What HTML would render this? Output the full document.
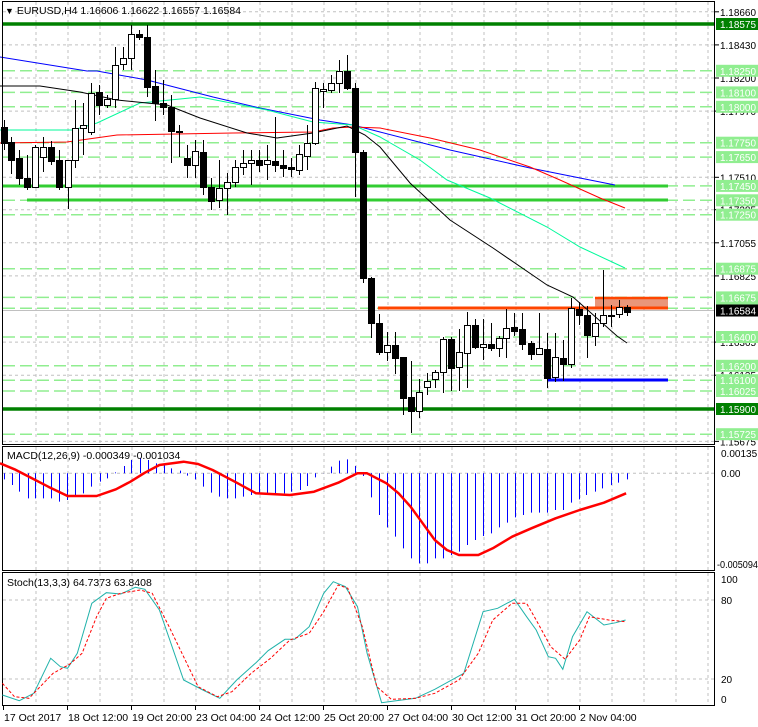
<!DOCTYPE html>
<html><head><meta charset="utf-8"><style>
html,body{margin:0;padding:0;background:#fff;}
svg{display:block;font-family:"Liberation Sans",sans-serif;font-size:10.5px;}
</style></head><body>
<svg id="s" width="758" height="727" viewBox="0 0 758 727" xmlns="http://www.w3.org/2000/svg">
<rect width="758" height="727" fill="#fff"/>
<g id="grid" stroke="#c0c0c0" stroke-dasharray="3,3" stroke-width="1"></g>
<g id="lg" stroke="#90ee90" stroke-width="1.5" stroke-dasharray="12,5"></g>
<line x1="3" y1="24" x2="715" y2="24" stroke="#008000" stroke-width="3.5"/>
<line x1="3" y1="409" x2="715" y2="409" stroke="#008000" stroke-width="3.5"/>
<line x1="3" y1="186" x2="668" y2="186" stroke="#32cd32" stroke-width="3"/>
<line x1="27" y1="200" x2="668" y2="200" stroke="#32cd32" stroke-width="3"/>
<line x1="3" y1="310.5" x2="715" y2="310.5" stroke="#c0c0c0" stroke-width="1"/>
<rect x="595" y="297" width="73" height="11" fill="#e9967a"/>
<line x1="595" y1="298" x2="668" y2="298" stroke="#ff4500" stroke-width="2.5"/>
<line x1="378" y1="308" x2="668" y2="308" stroke="#ff4500" stroke-width="3"/>
<line x1="547" y1="380" x2="668" y2="380" stroke="#0000ff" stroke-width="3"/>
<polyline fill="none" stroke="#0000ff" stroke-width="1" points="0,57 87,71 97,71 147,80 213,97 260,108 320,120 353,125 380,132 450,150 530,168 615,185"/>
<polyline fill="none" stroke="#ff0000" stroke-width="1" points="0,143 67,142 117,135 233,133 313,132 333,128 353,127 380,128 430,138 480,150 530,167 560,180 600,198 625,208"/>
<polyline fill="none" stroke="#00fa9a" stroke-width="1" points="0,130 73,130 97,123 140,103 200,97 267,110 313,122 353,125 380,137 420,160 447,180 490,198 547,227 580,247 625,268"/>
<polyline fill="none" stroke="#000" stroke-width="1" points="0,86 40,86 80,92 117,100 167,105 200,118 247,133 277,138 313,133 347,126 365,135 380,147 410,183 450,220 493,248 547,285 573,297 617,336 627,343"/>
<g id="candles"></g>
<rect x="2.5" y="1.5" width="712" height="443" fill="none" stroke="#000"/>
<rect x="2.5" y="446.5" width="712" height="124" fill="none" stroke="#000"/>
<rect x="2.5" y="572.5" width="712" height="133" fill="none" stroke="#000"/>
<text x="5" y="14" fill="#000"><tspan font-size="9">▼</tspan> EURUSD,H4  1.16606 1.16622 1.16557 1.16584</text>
<line x1="3" y1="473.3" x2="715" y2="473.3" stroke="#c0c0c0" stroke-dasharray="3,3"/>
<g id="hist" stroke="#0000ff" stroke-width="1"></g>
<polyline id="sig" fill="none" stroke="#ff0000" stroke-width="2.5" stroke-linejoin="round"/>
<text x="7" y="459">MACD(12,26,9) -0.000349 -0.001034</text>
<line x1="3" y1="600" x2="715" y2="600" stroke="#c0c0c0" stroke-dasharray="3,3"/>
<line x1="3" y1="679" x2="715" y2="679" stroke="#c0c0c0" stroke-dasharray="3,3"/>
<polyline id="stm" fill="none" stroke="#20b2aa" stroke-width="1"/>
<polyline id="sts" fill="none" stroke="#ff0000" stroke-width="1" stroke-dasharray="3,2"/>
<text x="7" y="586">Stoch(13,3,3) 64.7373 63.8408</text>
<g id="ax" font-size="10"></g>
<g font-size="10">
<text x="721" y="457">0.00135</text>
<text x="721" y="477">0.00</text>
<text x="717" y="568" textLength="41" lengthAdjust="spacingAndGlyphs">-0.005094</text>
<text x="721" y="583">100</text>
<text x="721" y="604">80</text>
<text x="721" y="683">20</text>
<text x="721" y="703">0</text>
</g>
<g id="time" font-size="10.5"></g>
</svg>
<script>
var NS="http://www.w3.org/2000/svg";
function el(p,t,a,txt){var e=document.createElementNS(NS,t);for(var k in a)e.setAttribute(k,a[k]);if(txt!==undefined)e.textContent=txt;document.getElementById(p).appendChild(e);return e;}
for(var x=36;x<715;x+=32){el('grid','line',{x1:x,y1:2,x2:x,y2:444});el('grid','line',{x1:x,y1:447,x2:x,y2:570});el('grid','line',{x1:x,y1:573,x2:x,y2:705});}
[11.8,44.9,78,111.1,177.3,209.7,242.8,275.9,342.1,375.2,441.4].forEach(function(y){el('grid','line',{x1:3,y1:y,x2:715,y2:y});});
[70.8,92.4,106.8,142.7,157.1,185.9,200.3,214.7,268.7,297.4,308.2,337,365.8,380.2,391,434.2].forEach(function(y){el('lg','line',{x1:3,y1:y,x2:715,y2:y});});
var C=[[4,120,150,127,143,1],[11,137,174,142,160,1],[19,150,185,158,178,1],[27,155,190,178,187,1],[35,145,188,147,187,0],[43,137,172,147,157,0],[51,141,165,147,161,1],[59,150,190,160,187,1],[68,160,209,160,187,0],[75,100,168,128,160,0],[83,103,155,125,128,0],[91,83,135,93,132,0],[99,85,115,92,105,1],[107,95,108,99,105,0],[115,47,108,65,99,0],[123,47,70,58,64,0],[131,25,70,34,58,0],[139,30,40,34,37,1],[147,25,97,37,87,1],[155,70,121,86,103,1],[163,80,115,103,107,1],[171,95,163,107,131,1],[179,125,157,131,132,1],[187,145,178,158,165,1],[195,140,178,151,165,0],[203,140,195,152,187,1],[211,178,210,187,201,1],[219,160,208,188,200,0],[227,173,215,182,188,0],[235,160,187,167,182,0],[243,150,175,163,167,0],[251,150,185,160,163,0],[259,150,172,160,165,1],[267,145,180,160,164,0],[275,117,172,161,165,1],[283,150,177,165,168,1],[291,158,177,167,169,1],[299,145,175,154,170,0],[307,125,170,143,156,0],[315,82,145,88,143,0],[323,83,108,89,91,0],[331,75,93,83,90,0],[339,60,93,71,83,0],[347,55,90,71,88,1],[355,83,197,88,152,1],[363,150,283,152,278,1],[371,277,338,278,323,1],[379,314,355,323,352,1],[387,332,361,345,352,0],[395,332,374,345,358,1],[403,357,415,357,398,1],[411,361,433,397,411,1],[419,379,418,392,411,0],[427,373,395,381,387,0],[435,370,388,372,379,0],[443,337,393,339,372,0],[451,337,391,339,368,1],[459,329,391,352,367,0],[467,312,388,325,353,0],[475,319,349,325,347,1],[483,319,360,344,347,0],[491,323,351,344,348,1],[499,336,357,338,348,0],[506,309,358,328,338,0],[514,313,336,327,331,1],[522,313,350,329,344,1],[531,341,360,343,354,1],[539,313,352,348,354,0],[547,333,388,349,378,1],[555,333,382,357,377,0],[563,340,381,358,364,1],[571,298,368,308,364,0],[579,302,325,309,315,1],[587,306,358,315,335,1],[595,313,346,323,336,0],[603,270,327,315,323,0],[611,305,327,315,316,0],[619,300,318,307,314,0],[627,305,316,307,312,1]];
C.forEach(function(c){el('candles','line',{x1:c[0]+.5,y1:c[1],x2:c[0]+.5,y2:c[2],stroke:'#000'});var h=Math.max(1,c[4]-c[3]);el('candles','rect',{x:c[0]-2.5,y:c[3]+.5,width:6,height:h,fill:c[5]?'#000':'#fff',stroke:'#000'});});
var H=[[8,118],[24,135],[40,155],[57,175],[73,175],[90,175],[106,175],[122,185],[139,180],[156,170],[172,160],[189,140],[206,125],[222,115],[239,97],[256,78],[272,60],[289,55],[306,60],[322,70],[339,75],[355,85],[372,92],[388,107],[404,118],[421,140],[437,158],[454,170],[470,175],[487,175],[503,170],[520,165],[537,160],[553,160],[570,160],[587,160],[603,155],[620,150],[636,138],[653,112],[669,100],[686,80],[702,62],[719,58],[735,78],[752,108],[768,172],[785,225],[801,262],[818,290],[834,325],[851,355],[867,370],[884,370],[900,355],[917,355],[934,345],[950,335],[967,315],[983,300],[1000,288],[1016,280],[1033,262],[1049,248],[1066,232],[1082,225],[1099,218],[1115,218],[1132,218],[1148,210],[1165,210],[1181,188],[1198,178],[1214,165],[1231,155],[1247,145],[1264,135],[1280,128],[1297,118]];
H.forEach(function(h){var x=Math.round(h[0]/2.07)+.5;el('hist','line',{x1:x,y1:473.3,x2:x,y2:440+h[1]/3});});
function pts(a){return a.map(function(p){return (p[0]/2.07).toFixed(1)+','+(440+p[1]/3).toFixed(1);}).join(' ');}
document.getElementById('sig').setAttribute('points',pts([[0,70],[30,88],[60,110],[100,140],[140,168],[200,168],[240,148],[270,125],[300,98],[330,75],[380,65],[410,72],[440,90],[490,128],[530,160],[600,165],[650,155],[700,128],[740,100],[760,100],[800,130],[825,160],[850,200],[875,250],[900,300],[925,330],[950,345],[990,345],[1020,325],[1060,290],[1100,265],[1150,235],[1200,210],[1250,188],[1296,160]]));
document.getElementById('stm').setAttribute('points',pts([[5,765],[40,782],[70,760],[105,655],[125,680],[140,685],[160,640],[190,490],[220,458],[250,462],[280,442],[300,448],[330,510],[380,720],[420,750],[455,775],[490,720],[530,668],[555,632],[590,598],[610,598],[640,560],[670,460],[690,425],[715,440],[740,500],[760,640],[790,788],[820,782],[860,775],[900,748],[960,700],[1000,515],[1030,505],[1065,478],[1090,530],[1110,570],[1135,650],[1150,655],[1165,688],[1185,590],[1215,515],[1250,555],[1275,548],[1295,540]]));
document.getElementById('sts').setAttribute('points',pts([[5,730],[30,770],[60,775],[110,700],[145,672],[170,640],[200,530],[220,475],[250,460],[290,450],[315,460],[350,560],[380,650],[410,740],[450,770],[480,755],[520,700],[560,655],[600,600],[640,580],[670,515],[700,435],[720,445],[750,560],[780,740],[810,778],[860,775],[900,760],[950,720],[990,640],[1020,540],[1060,490],[1090,490],[1110,540],[1140,620],[1170,658],[1200,600],[1220,530],[1260,540],[1295,545]]));
var G=[[11.8,'1.18660'],[44.9,'1.18430'],[78,'1.18200'],[111.1,'1.17970'],[177.3,'1.17510'],[209.7,'1.17285'],[242.8,'1.17055'],[275.9,'1.16825'],[342.1,'1.16365'],[375.2,'1.16135'],[441.4,'1.15675']];
G.forEach(function(g){el('ax','line',{x1:715,y1:g[0],x2:719,y2:g[0],stroke:'#000'});el('ax','text',{x:720,y:g[0]+4,textLength:36,lengthAdjust:'spacingAndGlyphs'},g[1]);});
var L=[[70.8,'1.18250'],[92.4,'1.18100'],[106.8,'1.18000'],[142.7,'1.17750'],[157.1,'1.17650'],[185.9,'1.17450'],[200.3,'1.17350'],[214.7,'1.17250'],[268.7,'1.16875'],[297.4,'1.16675'],[308.2,'1.16600'],[337,'1.16400'],[365.8,'1.16200'],[380.2,'1.16100'],[391,'1.16025'],[434.2,'1.15725']];
function lab(g,bg,fg){el('ax','rect',{x:716,y:g[0]-6,width:42,height:12,fill:bg});el('ax','text',{x:720,y:g[0]+4,fill:fg,textLength:36,lengthAdjust:'spacingAndGlyphs'},g[1]);}
L.forEach(function(g){lab(g,'#90ee90','#fff');});
[[24,'1.18575'],[409,'1.15900']].forEach(function(g){lab(g,'#008000','#fff');});
lab([310.5,'1.16584'],'#000','#fff');
var T=['17 Oct 2017','18 Oct 12:00','19 Oct 20:00','23 Oct 04:00','24 Oct 12:00','25 Oct 20:00','27 Oct 04:00','30 Oct 12:00','31 Oct 20:00','2 Nov 04:00'];
T.forEach(function(t,i){var x=3+i*64;el('time','line',{x1:x+.5,y1:705,x2:x+.5,y2:710,stroke:'#000'});el('time','text',{x:x+1,y:721},t);});
</script>
</body></html>
